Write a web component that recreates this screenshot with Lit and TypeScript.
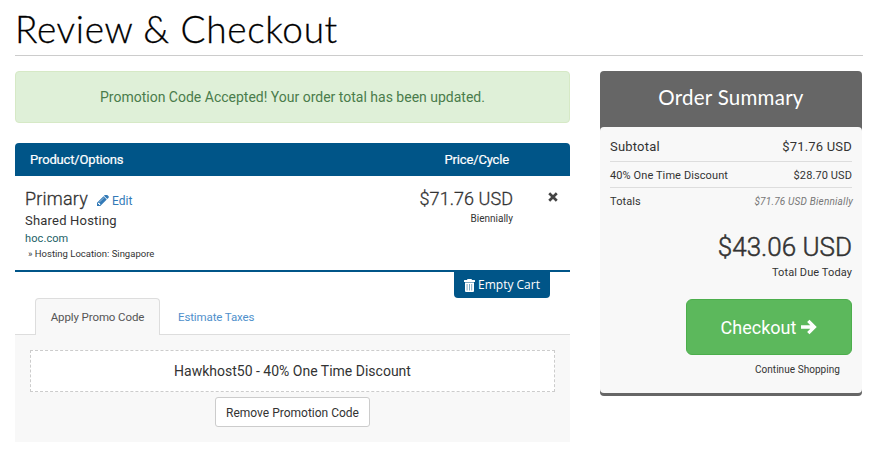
import { LitElement, html, css, svg } from "lit";
import { customElement } from "lit/decorators.js";

const pencil = svg`<path d="M363 1408l91-91-235-235-91 91v107h128v128h107zm523-928q0-22-22-22-10 0-17 7l-542 542q-7 7-7 17 0 22 22 22 10 0 17-7l542-542q7-7 7-17zm-54-192l416 416-832 832H0v-416zm683 96q0 53-37 90l-166 166-416-416 166-165q36-38 90-38 53 0 91 38l235 234q37 39 37 91z"/>`;
const cross = svg`<path d="M1.100 1.100L7.900 7.900M7.900 1.100L1.100 7.900" fill="none" stroke="currentColor" stroke-width="2.400"/>`;
const arrow = svg`<path d="M1 8H14M8.300 1.900L14.400 8L8.300 14.100" fill="none" stroke="currentColor" stroke-width="3.300"/>`;

@customElement("app-root")
export class AppRoot extends LitElement {
  static styles = css`
    :host { display: block; min-height: 458px; background: #fff; color: #333;
      font-family: Roboto, "Liberation Sans", sans-serif; font-size: 14px; }
    * { box-sizing: border-box; }
    h1, h2 { margin: 0; }
    svg { display: block; fill: currentColor; flex: none; }
    .page { width: 848px; margin-left: 15px; }
    h1 { height: 56px; border-bottom: 1px solid #ccc; color: #000; white-space: nowrap;
      font: 300 37px/57px Lato, sans-serif; letter-spacing: .650px; -webkit-text-stroke: .3px #000; }
    .columns { display: grid; grid-template-columns: 555px 262px; gap: 30px; margin-top: 15px; align-items: start; }
    .alert { height: 52px; line-height: 50px; text-align: center; color: #4a7c4b; background: #dff0d8;
      border: 1px solid #d6e9c6; border-radius: 4px; }
    .cart-head { display: flex; justify-content: space-between; margin-top: 20px; height: 33px; padding: 0 61px 0 15px;
      background: #005588; color: #fff; line-height: 33px; font-size: 13px;
      -webkit-text-stroke: .2px #fff; letter-spacing: -.16px; border-radius: 4px 4px 0 0; }
    .item { display: flex; height: 96px; padding: 12px 12px 0 10px; border-bottom: 2px solid #005588; }
    .product { flex: 1; }
    .name { display: flex; align-items: center; font-size: 18px; line-height: 22px; font-weight: 300; letter-spacing: .2px;
      -webkit-text-stroke: .3px currentColor; }
    .edit { display: flex; align-items: center; gap: 3px; margin-left: 9px; padding-top: 4px; color: #337ab7;
      font-size: 12px; line-height: 18px; font-weight: 400; letter-spacing: 0; -webkit-text-stroke: 0; }
    .group { font-size: 13px; line-height: 22px; letter-spacing: .2px; }
    .domain { color: #226066; font-size: 11px; line-height: 14px; letter-spacing: .1px; }
    .option { padding-left: 3px; font-size: 9.500px; line-height: 16px; }
    .price { width: 120px; text-align: right; font-size: 18px; line-height: 22px; font-weight: 300; }
    .price .amount { letter-spacing: .05px; -webkit-text-stroke: .3px currentColor; }
    .cycle { font-size: 10px; line-height: 18px; font-weight: 400; }
    .remove { width: 45px; display: flex; justify-content: flex-end; padding: 4px 0 0; color: #444; }
    .empty { display: flex; align-items: center; justify-content: center; gap: 3px; width: 96px; height: 26px;
      margin-left: 439px; background: #005588; color: #fff; border-radius: 0 0 4px 4px;
      font: 12px "Open Sans", sans-serif; white-space: nowrap; }
    .empty span { margin-top: -1px; }
    .tabs { display: flex; height: 37px; padding-left: 20px; border-bottom: 1px solid #ddd;
      font-size: 11.500px; line-height: 39px; }
    .tab { width: 125px; height: 37px; text-align: center; color: #555; background: #f8f8f8; border: 1px solid #ddd;
      border-bottom: 0; border-radius: 4px 4px 0 0; line-height: 37px; letter-spacing: -.1px; }
    .link { padding-left: 18px; color: #4f90cb; letter-spacing: -.12px; }
    .pane { height: 107px; padding: 15px 15px 0; background: #f8f8f8; display: flex; flex-direction: column;
      align-items: center; gap: 5px; }
    .code { width: 525px; height: 42px; line-height: 40px; text-align: center; background: #fff; border: 1px dashed #ccc; }
    .button { width: 155px; height: 30px; border: 1px solid #ccc; border-radius: 3px; background: #fff;
      text-align: center; font-size: 12px; line-height: 30px; }
    .summary { background: #666; border-radius: 4px; padding-bottom: 3px; }
    h2 { height: 56px; color: #fff; text-align: center; font: 400 20.500px/53px Lato, sans-serif; letter-spacing: .25px; }
    .body { height: 266px; padding: 5px 10px 0; background: #f8f8f8; border-radius: 4px; display: flex; flex-direction: column; }
    .row { display: flex; justify-content: space-between; border-bottom: 1px solid #ddd; font-size: 11px;
      height: 26px; line-height: 28px; letter-spacing: .1px; }
    .row.first { height: 30px; line-height: 30px; font-size: 13px; letter-spacing: .2px; }
    .row.last { border: 0; }
    .recurring { font-size: 10px; line-height: 27px; font-style: italic; color: #777; margin-right: -1px; letter-spacing: .2px; }
    .total { margin-top: 16px; text-align: right; font-size: 26px; line-height: 34px; font-weight: 300;
      -webkit-text-stroke: .5px currentColor; }
    .due { text-align: right; font-size: 11px; line-height: 17px; letter-spacing: .1px; }
    .checkout { display: flex; align-items: center; justify-content: center; gap: 4px; width: 166px; height: 56px;
      margin: 18px 0 0 auto; color: #fff; background: #5cb85c; border: 1px solid #4cae4c; border-radius: 6px; font-size: 18px; }
    .continue { margin-right: 12px; text-align: right; font-size: 10px; line-height: 29px; letter-spacing: .05px; }
  `;

  render() {
    return html`<main class="page">
      <h1>Review &amp; Checkout</h1>
      <div class="columns">
        <section>
          <div class="alert">Promotion Code Accepted! Your order total has been updated.</div>
          <div class="cart-head"><span>Product/Options</span><span>Price/Cycle</span></div>
          <div class="item">
            <div class="product">
              <div class="name"><span>Primary</span>
                <a class="edit"><svg width="12" height="12" viewBox="0 128 1536 1536">${pencil}</svg><span>Edit</span></a></div>
              <div class="group">Shared Hosting</div>
              <div class="domain">hoc.com</div>
              <div class="option">» Hosting Location: Singapore</div>
            </div>
            <div class="price"><div class="amount">$71.76 USD</div><div class="cycle">Biennially</div></div>
            <div class="remove"><svg width="10" height="10" viewBox="0 0 9 9">${cross}</svg></div>
          </div>
          <div class="empty">
            <svg width="11" height="13" viewBox="0 0 11 13"><path fill-rule="evenodd" d="M4 0h3q1 0 1 1h2.500q.5 0 .5.500V3H0V1.500Q0 1 .5 1H3q0-1 1-1zM1 3.500h9V12q0 1-1 1H2q-1 0-1-1zM2.800 5v6.500h.5V5zm2.400 0v6.500h.5V5zm2.400 0v6.500h.5V5z"/></svg>
            <span>Empty Cart</span>
          </div>
          <div class="tabs"><div class="tab">Apply Promo Code</div><a class="link">Estimate Taxes</a></div>
          <div class="pane">
            <div class="code">Hawkhost50 - 40% One Time Discount</div>
            <div class="button">Remove Promotion Code</div>
          </div>
        </section>
        <aside class="summary">
          <h2>Order Summary</h2>
          <div class="body">
            <div class="row first"><span>Subtotal</span><span>$71.76 USD</span></div>
            <div class="row"><span>40% One Time Discount</span><span>$28.70 USD</span></div>
            <div class="row last"><span>Totals</span><span class="recurring">$71.76 USD Biennially</span></div>
            <div class="total">$43.06 USD</div>
            <div class="due">Total Due Today</div>
            <div class="checkout"><span>Checkout</span><svg width="17" height="16" viewBox="0 0 17 16">${arrow}</svg></div>
            <div class="continue">Continue Shopping</div>
          </div>
        </aside>
      </div>
    </main>`;
  }
}
